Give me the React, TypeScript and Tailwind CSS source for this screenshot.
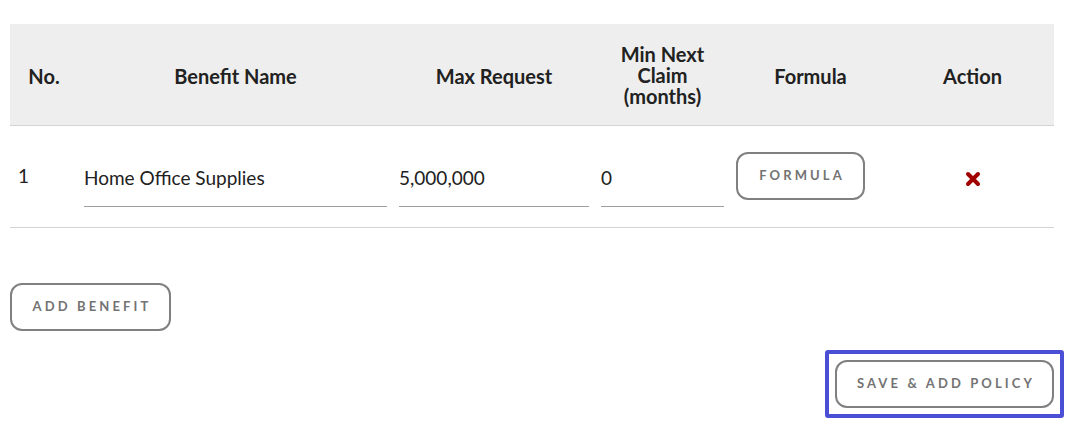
import React from 'react';

const font = { fontFamily: 'Lato, "Open Sans", sans-serif' };

export default function App() {
  return (
    <div className="bg-white w-[1071px] h-[440px] pt-[24px] px-[10px]" style={font}>
      <div className="w-[1044px]">
        {/* Table */}
        <table className="w-[1044px] border-collapse table-fixed">
          <colgroup>
            <col className="w-[68px]" />
            <col className="w-[315px]" />
            <col className="w-[202px]" />
            <col className="w-[135px]" />
            <col className="w-[161px]" />
            <col className="w-[163px]" />
          </colgroup>
          <thead>
            <tr className="bg-[#eeeeee] h-[101px] border-b border-[#d4d4d4] text-[#212121]">
              <th className="font-bold text-[20px] text-center pt-[3px]">No.</th>
              <th className="font-bold text-[20px] text-center pt-[3px]">Benefit Name</th>
              <th className="font-bold text-[20px] text-center pt-[3px]">Max Request</th>
              <th className="font-bold text-[20px] leading-[21px] text-center pt-[2px]">
                Min Next
                <br />
                Claim
                <br />
                (months)
              </th>
              <th className="font-bold text-[20px] text-center pt-[3px]">Formula</th>
              <th className="font-bold text-[20px] text-center pt-[3px]">Action</th>
            </tr>
          </thead>
          <tbody>
            <tr className="h-[102px] border-b border-[#d4d4d4] text-[#212121] text-[19px]">
              <td className="pl-[8px]">1</td>
              <td className="px-[6px]">
                <input
                  defaultValue="Home Office Supplies"
                  className="w-full h-[58px] mt-[3px] border-b border-[#9e9e9e] outline-none bg-transparent"
                  style={font}
                />
              </td>
              <td className="px-[6px]">
                <input
                  defaultValue="5,000,000"
                  className="w-full h-[58px] mt-[3px] border-b border-[#9e9e9e] outline-none bg-transparent"
                  style={font}
                />
              </td>
              <td className="px-[6px]">
                <input
                  defaultValue="0"
                  className="w-full h-[58px] mt-[3px] border-b border-[#9e9e9e] outline-none bg-transparent"
                  style={font}
                />
              </td>
              <td className="px-[6px]">
                <button className="w-[129px] h-[48px] border-2 border-[#808080] rounded-[12px] bg-white text-[#737373] text-[13px] font-bold tracking-[0.24em] pl-[3px]">
                  FORMULA
                </button>
              </td>
              <td className="text-center">
                <svg width="16" height="16" viewBox="0 0 16 16" className="inline-block mt-[2px]">
                  <path d="M3 3 L13 13 M13 3 L3 13" stroke="#a00000" strokeWidth="4" strokeLinecap="round" />
                </svg>
              </td>
            </tr>
          </tbody>
        </table>

        {/* Actions */}
        <div className="mt-[55px]">
          <button className="h-[48px] w-[161px] border-2 border-[#808080] rounded-[12px] bg-white text-[#737373] text-[13px] font-bold tracking-[0.24em] pl-[3px]">
            ADD BENEFIT
          </button>
        </div>
        <div className="flex justify-end mt-[19px] mr-[-10px]">
          <div className="border-4 border-[#4a4fd6] rounded-[3px] p-[6px]">
            <button className="h-[48px] w-[219px] border-2 border-[#808080] rounded-[12px] bg-white text-[#737373] text-[13px] font-bold tracking-[0.24em] pl-[3px] block">
              SAVE &amp; ADD POLICY
            </button>
          </div>
        </div>
      </div>
    </div>
  );
}
